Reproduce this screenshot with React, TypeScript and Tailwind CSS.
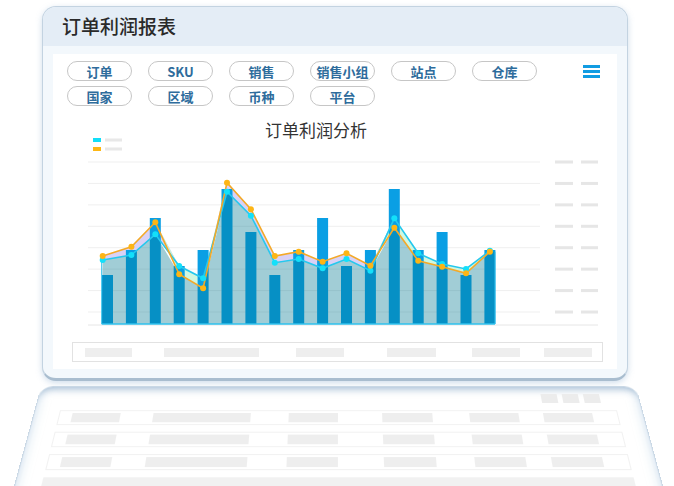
import React from "react"

const BARS = [49, 74, 106, 58, 74, 135, 92, 49, 74, 106, 58, 74, 135, 74, 92, 49, 74]
const CYAN = [124, 119, 98.3, 130, 142.3, 55.7, 79.7, 126.7, 123, 132.3, 123, 134.7, 82.3, 117.3, 128, 133, 114.7]
const ORANGE = [120, 110.7, 86.3, 138.3, 152.3, 46.7, 73.3, 120, 115.7, 125.7, 117.3, 129.7, 91.7, 124.7, 130.7, 137.3, 115.7]
const XS = BARS.map((_, i) => (i === 0 ? 16.7 : 21.5 + i * 23.9))
const BASE = 188

const pts = (ys: number[]) => XS.map((x, i) => `${x},${ys[i]}`).join(" ")
const revPts = (ys: number[]) =>
  XS.map((x, i) => `${x},${ys[i]}`)
    .reverse()
    .join(" ")

const upper = CYAN.map((c, i) => Math.min(c, ORANGE[i]))
const lower = CYAN.map((c, i) => Math.max(c, ORANGE[i]))
const GRID = [0, 1, 2, 3, 4, 5, 6, 7].map((k) => 26 + k * 21.43)

const filters = [
  ["订单", "SKU", "销售", "销售小组", "站点", "仓库"],
  ["国家", "区域", "币种", "平台"],
]

function Pill({ label }: { label: string }) {
  return (
    <div className="h-[20px] w-[65px] rounded-full border-[1.5px] border-[#c6c6c6] bg-white flex items-center justify-center text-[13px] font-bold leading-none text-[#2e6c9c]">
      {label}
    </div>
  )
}

function ProfitChart() {
  return (
    <svg width="516" height="194" viewBox="0 0 516 194" className="block">
      {/* legend */}
      <rect x="7" y="2" width="8" height="4" fill="#12def8" />
      <rect x="19" y="2.5" width="17" height="3" fill="#e8e8e8" />
      <rect x="7" y="11" width="8" height="4" fill="#fdb714" />
      <rect x="19" y="11.5" width="17" height="3" fill="#e8e8e8" />

      {GRID.map((y) => (
        <g key={y}>
          <line x1="2" x2="454" y1={y} y2={y} stroke="#efefef" strokeWidth="1" />
          <rect x="469" y={y - 1.5} width="18" height="3" fill="#e6e6e6" />
          <rect x="495" y={y - 1.5} width="17" height="3" fill="#e6e6e6" />
        </g>
      ))}
      <line x1="2" x2="512" y1="189" y2="189" stroke="#e6e6e6" strokeWidth="1" />

      {/* bands between the two series */}
      <polygon points={`${pts(upper)} ${revPts(CYAN)}`} fill="#cfc6f4" opacity="0.8" />
      <polygon points={`${pts(upper)} ${revPts(ORANGE)}`} fill="#c4f5d8" opacity="0.8" />

      {BARS.map((h, i) => (
        <rect key={i} x={16 + i * 23.9} y={BASE - h} width="11" height={h} fill="#0a9fe4" />
      ))}

      <polygon
        points={`15.7,${BASE} ${pts(lower)} 409,${lower[16]} 409,${BASE}`}
        fill="#00778f"
        fillOpacity="0.37"
      />
      <line x1="15.7" x2="409" y1={BASE} y2={BASE} stroke="#2fc0ec" strokeWidth="1.5" />
      <line x1="409" x2="409" y1={lower[16]} y2={BASE} stroke="#2fc0ec" strokeWidth="1" />
      <line x1="15.7" x2="15.7" y1={lower[0]} y2={BASE} stroke="#2fc0ec" strokeWidth="1" />

      <polyline points={pts(CYAN)} fill="none" stroke="#25c8ee" strokeWidth="1.6" />
      <polyline points={pts(ORANGE)} fill="none" stroke="#f4a928" strokeWidth="1.6" />
      {XS.map((x, i) => (
        <circle key={"c" + i} cx={x} cy={CYAN[i]} r="3" fill="#13e0fa" />
      ))}
      {XS.map((x, i) => (
        <circle key={"o" + i} cx={x} cy={ORANGE[i]} r="3" fill="#fdb515" />
      ))}
    </svg>
  )
}

function PlaceholderRow({ className = "", bar = "h-[9px]" }: { className?: string; bar?: string }) {
  return (
    <div className={"flex items-center " + className}>
      <div className={"ml-[12px] w-[47px] bg-[#eeeeee] " + bar} />
      <div className={"ml-[32px] w-[95px] bg-[#eeeeee] " + bar} />
      <div className={"ml-[37px] w-[48px] bg-[#eeeeee] " + bar} />
      <div className={"ml-[43px] w-[49px] bg-[#eeeeee] " + bar} />
      <div className={"ml-[36px] w-[48px] bg-[#eeeeee] " + bar} />
      <div className={"ml-[24px] w-[48px] bg-[#eeeeee] " + bar} />
    </div>
  )
}

export default function App() {
  return (
    <div className="w-[674px] h-[486px] overflow-hidden bg-white pt-[6px] font-['Noto_Sans_CJK_SC',sans-serif]">
      {/* screen */}
      <div className="ml-[42px] w-[586px] h-[375px] rounded-[14px] border border-[#c3d3e1] border-b-[3px] border-b-[#a9bdcf] bg-[#f3f8fc] shadow-[0_2px_6px_rgba(120,160,200,0.35)] flex flex-col overflow-hidden">
        <div className="h-[39px] shrink-0 bg-[#e4edf6] flex items-center px-[19px] text-[19px] font-medium text-[#2a2a2a]">
          订单利润报表
        </div>
        <div className="flex-1 px-[10px] pt-[8px] pb-[9px] flex">
          <div className="flex-1 bg-white flex flex-col">
            <div className="flex pt-[7px] pl-[14px]">
              <div className="grid grid-cols-[repeat(6,65px)] gap-x-[16px] gap-y-[5px]">
                {filters.flat().map((f) => (
                  <Pill key={f} label={f} />
                ))}
              </div>
              <div className="ml-auto mr-[17px] mt-[4px] flex flex-col gap-[2px]">
                <div className="h-[3px] w-[17px] bg-[#119ce2]" />
                <div className="h-[3px] w-[17px] bg-[#119ce2]" />
                <div className="h-[3px] w-[17px] bg-[#119ce2]" />
              </div>
            </div>

            <div className="mt-[14px] ml-[33px] w-[460px] h-[20px] text-center text-[17px] leading-[20px] text-[#333333]">
              订单利润分析
            </div>
            <div className="-mt-[4px] ml-[33px]">
              <ProfitChart />
            </div>

            <PlaceholderRow className="mt-[12px] ml-[19px] w-[531px] h-[20px] border border-[#e2e2e2]" />
          </div>
        </div>
      </div>

      {/* keyboard base */}
      <div className="mt-[5px] ml-[41px] w-[595px] h-[140px] origin-top [transform:perspective(600px)_rotateX(28.6deg)] rounded-t-[12px] border border-[#cad8e5] bg-white shadow-[inset_0_8px_8px_-6px_rgba(90,130,170,0.45),inset_0_0_12px_rgba(170,200,225,0.55)] px-[24px] pt-[8px]">
        <div className="flex justify-end gap-[5px] pr-[14px]">
          <div className="h-[10px] w-[16px] bg-[#ececec]" />
          <div className="h-[10px] w-[16px] bg-[#ececec]" />
          <div className="h-[10px] w-[16px] bg-[#ececec]" />
        </div>
        <div className="mt-[8px] flex flex-col gap-[7px]">
          <PlaceholderRow className="h-[16px] border border-[#f1f1f1]" bar="h-[10px]" />
          <PlaceholderRow className="h-[16px] border border-[#f1f1f1]" bar="h-[10px]" />
          <PlaceholderRow className="h-[16px] border border-[#f1f1f1]" bar="h-[10px]" />
          <div className="h-[10px] bg-[#f1f1f1]" />
        </div>
      </div>
    </div>
  )
}
